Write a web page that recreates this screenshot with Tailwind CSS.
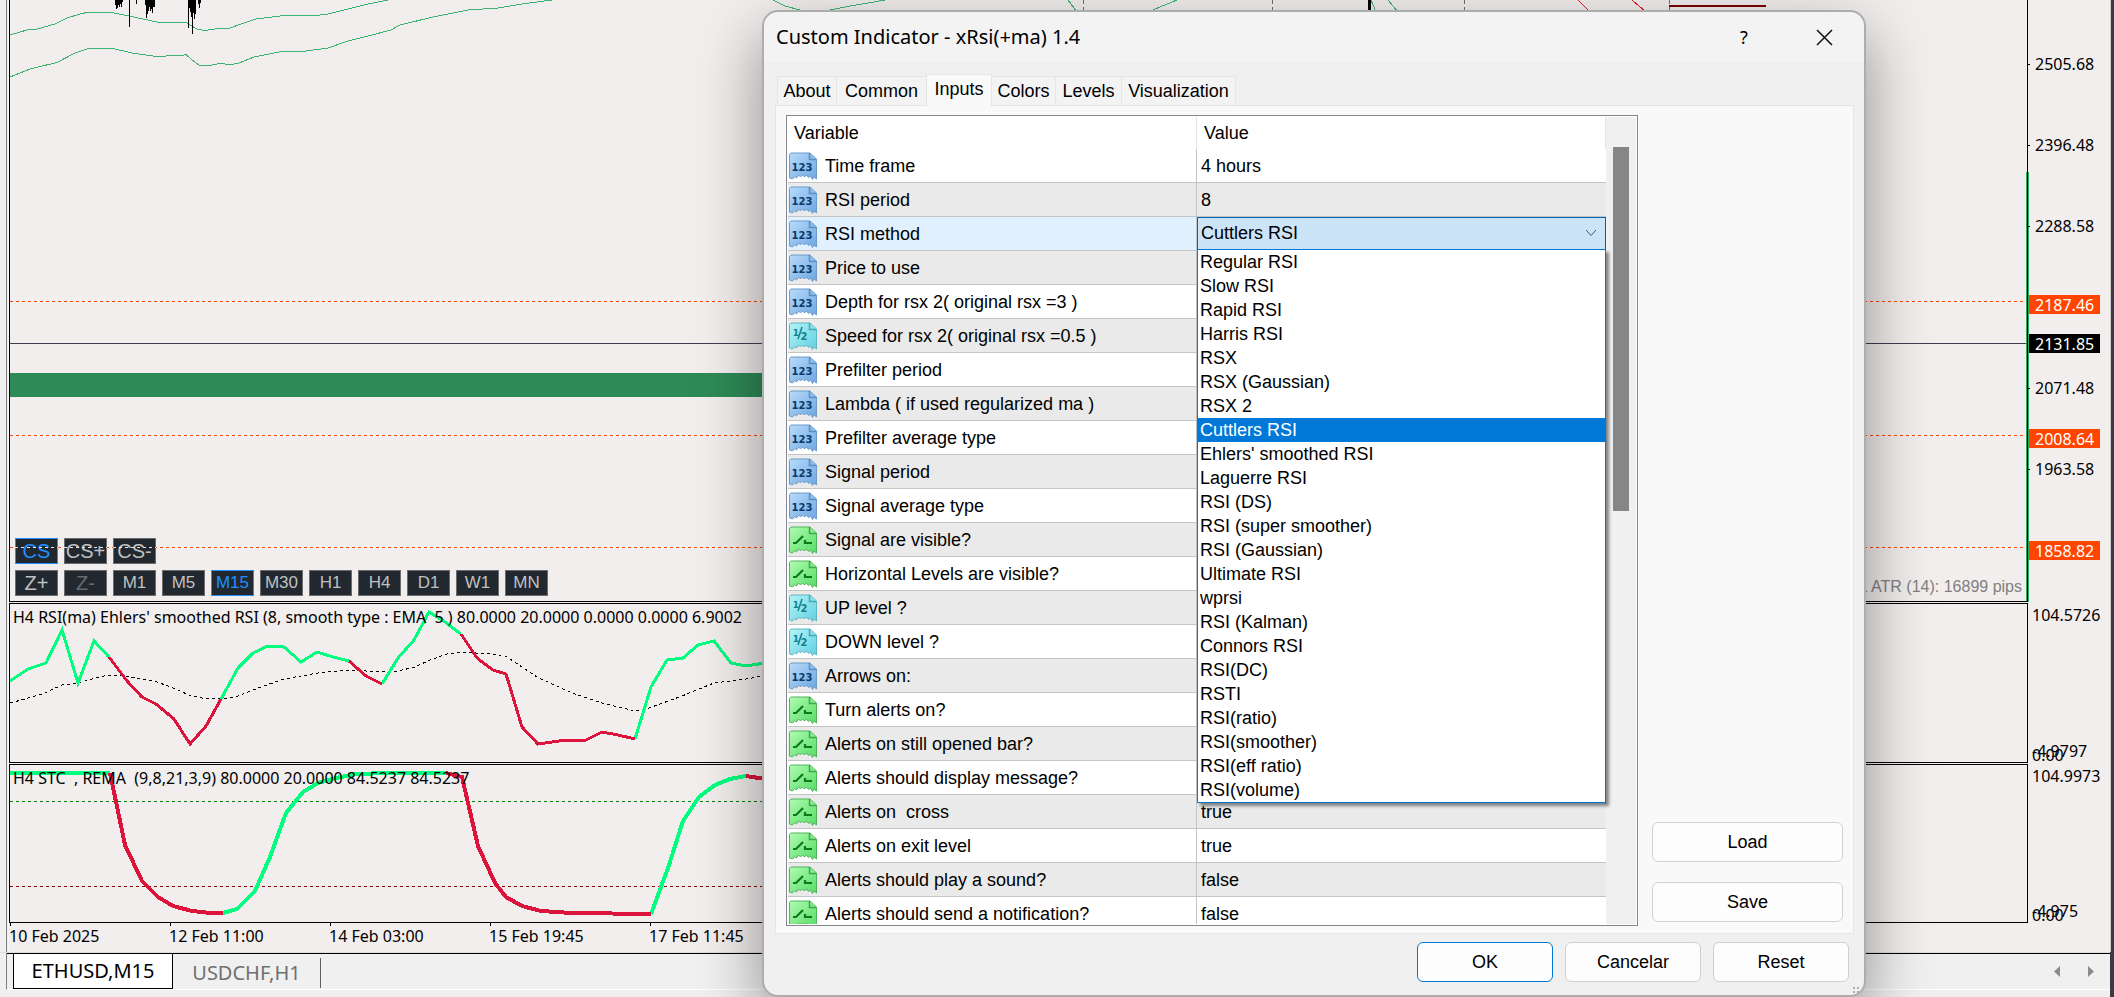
<!DOCTYPE html>
<html lang="en">
<head>
<meta charset="utf-8">
<title>Custom Indicator - xRsi(+ma) 1.4</title>
<script src="https://cdn.jsdelivr.net/npm/@tailwindcss/browser@4"></script>
</head>
<body class="relative flex h-screen flex-col overflow-hidden bg-[#f0f0f0] font-['Liberation_Sans',sans-serif] text-lg text-black">

<!-- icon library -->
<svg class="absolute size-0" aria-hidden="true">
  <defs>
    <linearGradient id="gBlue" x1="0" y1="0" x2="1" y2="1"><stop offset="0" stop-color="#b9dbfb"/><stop offset="1" stop-color="#6ca6e2"/></linearGradient>
    <linearGradient id="gCyan" x1="0" y1="0" x2="1" y2="1"><stop offset="0" stop-color="#b4f4f8"/><stop offset="1" stop-color="#62cfdf"/></linearGradient>
    <linearGradient id="gGreen" x1="0" y1="0" x2="1" y2="1"><stop offset="0" stop-color="#b0fbb0"/><stop offset="1" stop-color="#55dc66"/></linearGradient>
    <path id="sheet" d="M2 1H21L27.500 7V27L25 25L23.500 27.500L21.500 24L19.500 25.500L17.500 23L15.500 25L13.500 23L11.500 25L9.500 23L7.500 26L5.500 24.500L3.500 27L.5 26V2.500Z"/>
    <path id="fold" d="M20.500 1V7.500H27.500"/>
    <symbol id="int" viewBox="0 0 28 28">
      <use href="#sheet" fill="url(#gBlue)" stroke="#6d9cc8"/>
      <use href="#fold" fill="#8fbdea" stroke="#5a8fc4" stroke-width="1.500"/>
      <text x="13" y="19" text-anchor="middle" font-family="DejaVu Sans" font-weight="bold" font-size="10" fill="#0b3a66">123</text>
    </symbol>
    <symbol id="dbl" viewBox="0 0 28 28">
      <use href="#sheet" fill="url(#gCyan)" stroke="#5fb6c4"/>
      <use href="#fold" fill="#8ee3ec" stroke="#45a9b8" stroke-width="1.500"/>
      <text x="7" y="14" text-anchor="middle" font-family="DejaVu Sans" font-weight="bold" font-size="9" fill="#157f8c">1</text>
      <path d="M13 5L9 17" stroke="#157f8c" stroke-width="1.500"/>
      <text x="15" y="18" text-anchor="middle" font-family="DejaVu Sans" font-weight="bold" font-size="10" fill="#157f8c">2</text>
    </symbol>
    <symbol id="bool" viewBox="0 0 28 28">
      <use href="#sheet" fill="url(#gGreen)" stroke="#52b35c"/>
      <use href="#fold" fill="#86ec8c" stroke="#3fa74b" stroke-width="1.500"/>
      <path d="M4 17H7L14 10M16 14V17H23" fill="none" stroke="#0c7a1c" stroke-width="2.200"/>
    </symbol>
  </defs>
</svg>

<!-- chart window -->
<main class="flex min-h-0 flex-1 font-['Noto_Sans',sans-serif] text-base leading-5">
  <div class="w-[9px] shrink-0 border-r border-[#f8f8f8] bg-[#f0f0f0]"><div class="ml-[6px] h-full w-px bg-[#808080]"></div></div>

  <div class="flex min-w-0 flex-1 flex-col bg-[#f2eeed]">
    <!-- price -->
    <section class="flex min-h-0 flex-1">
      <div class="relative flex min-w-0 flex-1 flex-col justify-end overflow-hidden border-b border-l border-r border-black">
        <svg class="absolute inset-0 h-full w-full" shape-rendering="crispEdges" aria-hidden="true">
          <g transform="translate(-10 0)" fill="none">
            <rect x="10" y="373" width="1200" height="24" fill="#2e8b57"/>
            <g stroke="#3cb371">
              <path d="M10 35L27 30L37 29L55 24L67 18L80 14L89 12H109L129 16L157 22H185L197 29L204 30.500L219 28.500L230 28L241 24L256 19L284 15.500L313 16L328 14L348 9L368 4L388 0"/>
              <path d="M10 77L30 69L57 62.500L75 53L89 48.500H113L132 53L157 56.500L184 55L186 54.500L192 60L199 65L208 66L221 63L229 65L239 63L254 57L279 52L306 51L328 48L348 41L368 36L391 30L400 25L433 17L468 10L498 8L522 4L552 0"/>
              <path d="M773 0L785 6L800 10L815 11L830 10L850 6L868 3L885 0M1068 0L1077 12M1148 12L1160 7L1177 0M1371 0L1376 12M1388 0L1398 12"/>
            </g>
            <path d="M1578 0L1590 12M1632 0L1646 12" stroke="#e01b1b"/>
            <path d="M1083.500 0V12M1272.500 0V12M1464.500 0V12M1669.500 0V12" stroke="#707070" stroke-dasharray="4 3"/>
            <path d="M1669 6H1766" stroke="#7a0000" stroke-width="2"/>
            <path d="M1369.500 0V12" stroke="#000" stroke-width="3"/>
            <path d="M115.500 0V5M116.500 0V9M117.500 0V8M118.500 0V5M119.500 0V7M120.500 0V4M121.500 0V7M122.500 0V2M129.500 0V27M136.500 0V4M145.500 0V5M146.500 0V18M147.500 0V14M148.500 0V11M149.500 0V7M150.500 0V11M151.500 0V9M152.500 0V13M153.500 0V7M154.500 0V7M188.500 0V28M189.500 0V8M190.500 0V12M191.500 0V17M192.500 0V34M193.500 0V13M194.500 0V19M195.500 0V14M198.500 0V4M199.500 0V8M200.500 0V3" stroke="#000"/>
            <path d="M10 301.500H2024M10 435.500H2024M10 547.500H2024" stroke="#ff4500" stroke-dasharray="3 3"/>
            <path d="M10 343.500H2030" stroke="#3f3c52"/>
          </g>
        </svg>
        <div class="absolute right-0 bottom-0 top-[172px] w-px bg-[#2ea863]"></div>
        <div class="relative flex flex-col gap-1.5 pb-[5px] pl-[5px] font-['Liberation_Sans',sans-serif]">
          <div class="relative flex gap-1.5">
            <div class="flex gap-1.5" id="csRow"></div>
            <svg class="pointer-events-none absolute top-[9px] left-0" width="141" height="1" aria-hidden="true"><path d="M0 .5H43M49 .5H92M98 .5H141" stroke="#e8e8e8" stroke-dasharray="3 3"/></svg>
          </div>
          <div class="flex gap-1.5" id="tfRow"></div>
        </div>
        <p class="absolute right-[5px] bottom-1 font-['Liberation_Sans',sans-serif] text-base leading-5 text-[#808080]">H1 ATR (14): 16899 pips</p>
      </div>
      <div class="relative w-[82px] shrink-0">
        <div class="absolute left-0 bottom-0 top-[172px] w-px bg-[#2ea863]"></div>
        <div id="prices"></div>
      </div>
    </section>

    <!-- RSI -->
    <section class="mt-px flex h-[160px] shrink-0">
      <div class="relative min-w-0 flex-1 overflow-hidden border border-black">
        <svg class="absolute inset-0 h-full w-full" shape-rendering="crispEdges" aria-hidden="true">
          <g transform="translate(-10 -604)" fill="none">
            <path d="M10 703L25 699L45 693L62 685L78 683L95 678L109 675L124 676L154 681L171 687L189 695L202 698L222 699L238 696L258 688L284 679L318 673L349 670L366 671L382 672L398 671L415 667L430 660L447 654L462 652L490 654L507 657L537 677L572 693L602 703L635 711L649 708L682 696L714 683L746 679L763 676" stroke="#000" stroke-dasharray="3 3"/>
            <path d="M10 681L28 669L46 663L62 630L78 683L94 641L109 657M221 699L238 668L253 653L268 646L284 647L301 662L317 652L333 657L349 661M382 684L398 658L414 640L429 612L445 622L461 634M635 739L651 687L667 660L683 658L698 645L714 641L731 663L746 666L765 663" stroke="#00ff7f" stroke-width="3"/>
            <path d="M109 657L127 681L142 697L156 704L174 719L190 744L206 726L221 699M349 661L366 676L382 684M461 634L477 658L493 670L506 674L522 727L538 744L559 741L586 740L602 732L618 735L635 739" stroke="#dc143c" stroke-width="3"/>
          </g>
        </svg>
        <p class="relative ml-[3px] mt-[3px] whitespace-pre">H4 RSI(ma) Ehlers' smoothed RSI (8, smooth type : EMA  5 ) 80.0000 20.0000 0.0000 0.0000 6.9002</p>
      </div>
      <div class="relative w-[82px] shrink-0">
        <span class="absolute left-1 top-0.5">104.5726</span>
        <span class="absolute left-1 bottom-0.5">-4.9797</span>
        <span class="absolute left-1 -bottom-0.5">0.00</span>
      </div>
    </section>

    <!-- STC -->
    <section class="mt-px flex h-[159px] shrink-0">
      <div class="relative min-w-0 flex-1 overflow-hidden border border-black">
        <svg class="absolute inset-0 h-full w-full" shape-rendering="crispEdges" aria-hidden="true">
          <g transform="translate(-10 -765)" fill="none">
            <path d="M10 801.500H1210" stroke="#008000" stroke-dasharray="3 3"/>
            <path d="M10 886.500H1210" stroke="#8b0000" stroke-dasharray="3 3"/>
            <path d="M10 773H110M223 913L237 909L255 891L270 857L286 813L303 792L318 783L336 778L356 774L388 773H446M651 914L668 868L683 821L699 797L715 785L730 779L746 776" stroke="#00ff7f" stroke-width="4"/>
            <path d="M110 773L125 845L142 881L158 897L173 906L192 911L206 912.500L223 913M446 773L462 777L478 846L495 883L506 897L522 906L541 911L572 913L651 914M746 776L765 779" stroke="#dc143c" stroke-width="4"/>
          </g>
        </svg>
        <p class="relative ml-[3px] mt-[3px] whitespace-pre">H4 STC  , REMA  (9,8,21,3,9) 80.0000 20.0000 84.5237 84.5237</p>
      </div>
      <div class="relative w-[82px] shrink-0">
        <span class="absolute left-1 top-0.5">104.9973</span>
        <span class="absolute left-1 bottom-0.5">-4.975</span>
        <span class="absolute left-1 -bottom-0.5">0.00</span>
      </div>
    </section>

    <!-- time axis -->
    <div class="flex h-[29px] shrink-0 pl-px" id="times"></div>
  </div>
  <div class="w-1 shrink-0 border-l border-[#d0cccc] bg-[#3a3b47]"></div>
</main>

<!-- window tabs -->
<nav class="flex h-[45px] shrink-0 border-t border-[#dcdcdc] pl-[6px] font-['Noto_Sans',sans-serif] text-xl">
  <div class="flex h-[37px] flex-1 border-b border-l border-b-white border-l-[#808080]">
    <div class="flex flex-1 items-start border-t border-black pl-1.5">
      <button class="h-[35px] w-[160px] border border-t-0 border-black bg-white">ETHUSD,M15</button>
      <button class="mt-1 h-[30px] w-[148px] border-r border-[#606060] text-[#6f6f6f]">USDCHF,H1</button>
      <div class="ml-auto flex gap-7 self-center pr-[16px]">
        <button aria-label="Scroll tabs left"><svg width="6" height="11" fill="#8c8c8c"><path d="M6 0V11L0 5.500Z"/></svg></button>
        <button aria-label="Scroll tabs right"><svg width="6" height="11" fill="#8c8c8c"><path d="M0 0V11L6 5.500Z"/></svg></button>
      </div>
    </div>
  </div>
  <div class="-mt-px w-1 bg-[#3a3b47]"></div>
</nav>

<!-- dialog -->
<div role="dialog" aria-labelledby="dlgTitle" class="absolute top-[10px] bottom-0 left-[762px] flex w-[1104px] flex-col rounded-2xl border-2 border-[#adadad] bg-[#f0f0f0] shadow-[0_24px_64px_rgba(0,0,0,0.42)]">
  <header class="flex h-[50px] shrink-0 items-center rounded-t-2xl bg-[#f3f3f3] pl-3 pr-8 font-['Noto_Sans',sans-serif]">
    <h1 id="dlgTitle" class="flex-1 text-xl">Custom Indicator - xRsi(+ma) 1.4</h1>
    <button class="w-6 text-lg" aria-label="Help">?</button>
    <button class="ml-[60px] w-4" aria-label="Close"><svg width="17" height="17" fill="none" stroke="#111" stroke-width="1.500"><path d="M1 1L16 16M16 1L1 16"/></svg></button>
  </header>

  <div role="tablist" class="flex h-[43px] shrink-0 items-end pl-[13px]">
    <button role="tab" class="h-[29px] w-[60px] border border-b-0 border-[#e5e5e5] bg-[#f3f3f3] leading-7">About</button>
    <button role="tab" class="-ml-px h-[29px] w-[91px] border border-b-0 border-[#e5e5e5] bg-[#f3f3f3] leading-7">Common</button>
    <button role="tab" aria-selected="true" class="z-10 -mb-px -ml-px h-8 w-[66px] border border-b-0 border-[#e5e5e5] bg-[#f9f9f9] pb-1 leading-7">Inputs</button>
    <button role="tab" class="-ml-px h-[29px] w-[65px] border border-b-0 border-[#e5e5e5] bg-[#f3f3f3] leading-7">Colors</button>
    <button role="tab" class="-ml-px h-[29px] w-[67px] border border-b-0 border-[#e5e5e5] bg-[#f3f3f3] leading-7">Levels</button>
    <button role="tab" class="-ml-px h-[29px] w-[115px] border border-b-0 border-[#e5e5e5] bg-[#f3f3f3] leading-7">Visualization</button>
  </div>

  <div class="mr-[10px] ml-[11px] flex min-h-0 flex-1 gap-[14px] border border-[#e5e5e5] bg-[#f9f9f9] pt-[9px] pr-[10px] pb-[7px] pl-[10px]">
    <div class="relative flex min-w-0 flex-1 border border-[#828790] bg-white p-px">
      <div class="min-w-0 flex-1 overflow-hidden">
        <table class="w-full table-fixed border-separate border-spacing-0">
          <thead>
            <tr class="h-8">
              <th class="w-1/2 border-r border-[#e5e5e5] pl-[6px] text-left font-normal">Variable</th>
              <th class="border-r border-[#e5e5e5] pl-[7px] text-left font-normal">Value</th>
            </tr>
          </thead>
          <tbody id="rows"></tbody>
        </table>
      </div>
      <div class="flex w-[30px] shrink-0 justify-center bg-[#f0f0f0] pt-[30px]"><div class="h-[364px] w-4 bg-[#868686]"></div></div>
      <ul role="listbox" aria-label="RSI method options" id="options" class="absolute top-[133px] right-[31px] left-[410px] border border-[#0078d7] bg-white shadow-[3px_3px_3px_rgba(0,0,0,0.45)]"></ul>
    </div>
    <div class="flex w-[191px] shrink-0 flex-col justify-end gap-5 pb-1">
      <button class="h-10 rounded-md border border-[#d0d0d0] bg-[#fdfdfd]">Load</button>
      <button class="h-10 rounded-md border border-[#d0d0d0] bg-[#fdfdfd]">Save</button>
    </div>
  </div>

  <footer class="flex shrink-0 justify-end gap-3 pt-2 pr-[15px] pb-[13px]">
    <button class="h-10 w-[136px] rounded-md border border-[#0078d4] bg-[#fdfdfd]">OK</button>
    <button class="h-10 w-[136px] rounded-md border border-[#d0d0d0] bg-[#fdfdfd]">Cancelar</button>
    <button class="h-10 w-[136px] rounded-md border border-[#d0d0d0] bg-[#fdfdfd]">Reset</button>
  </footer>
  <svg class="absolute right-[5px] bottom-0" width="6" height="8" fill="#b0b0b0" aria-hidden="true"><path d="M0 0h2v2h-2zM4 0h2v2h-2zM0 4h2v2h-2zM4 4h2v2h-2z"/></svg>
</div>

<script>
  const byId = id => document.getElementById(id);

  const rows = [
    ['int', 'Time frame', '4 hours'], ['int', 'RSI period', '8'], ['int', 'RSI method', null],
    ['int', 'Price to use', ''], ['int', 'Depth for rsx 2( original rsx =3 )', ''],
    ['dbl', 'Speed for rsx 2( original rsx =0.5 )', ''], ['int', 'Prefilter period', ''],
    ['int', 'Lambda ( if used regularized ma )', ''], ['int', 'Prefilter average type', ''],
    ['int', 'Signal period', ''], ['int', 'Signal average type', ''], ['bool', 'Signal are visible?', ''],
    ['bool', 'Horizontal Levels are visible?', ''], ['dbl', 'UP level ?', ''], ['dbl', 'DOWN level ?', ''],
    ['int', 'Arrows on:', ''], ['bool', 'Turn alerts on?', ''], ['bool', 'Alerts on still opened bar?', ''],
    ['bool', 'Alerts should display message?', ''], ['bool', 'Alerts on  cross', 'true'],
    ['bool', 'Alerts on exit level', 'true'], ['bool', 'Alerts should play a sound?', 'false'],
    ['bool', 'Alerts should send a notification?', 'false']
  ];
  const combo = `<div class="relative h-[33px]">
      <select aria-label="RSI method" class="h-full w-full appearance-none border border-[#0063b1] bg-[#cce4f7] pl-[3px] pb-px"><option>Cuttlers RSI</option></select>
      <svg class="pointer-events-none absolute top-[12px] right-[9px]" width="12" height="8" fill="none" stroke="#555"><path d="M1 1L6 6.500L11 1"/></svg></div>`;
  byId('rows').innerHTML = rows.map(([icon, name, value], i) => {
    const shade = value === null ? 'h-[34px] bg-[#e0f0fe]' : i % 2 ? 'h-[34px] bg-[#eaeaea]' : 'h-[34px] bg-white';
    return `<tr class="${shade}">
      <td class="h-[34px] border-r border-b border-[#c4c4c4] p-0"><div class="flex items-center gap-2 pl-px whitespace-pre"><svg class="size-7 shrink-0"><use href="#${icon}"/></svg>${name}</div></td>
      <td class="h-[34px] border-b border-[#c4c4c4] p-0">${value === null ? combo : `<div class="pl-1">${value}</div>`}</td></tr>`;
  }).join('');

  const options = ['Regular RSI', 'Slow RSI', 'Rapid RSI', 'Harris RSI', 'RSX', 'RSX (Gaussian)', 'RSX 2', 'Cuttlers RSI',
    "Ehlers' smoothed RSI", 'Laguerre RSI', 'RSI (DS)', 'RSI (super smoother)', 'RSI (Gaussian)', 'Ultimate RSI', 'wprsi',
    'RSI (Kalman)', 'Connors RSI', 'RSI(DC)', 'RSTI', 'RSI(ratio)', 'RSI(smoother)', 'RSI(eff ratio)', 'RSI(volume)'];
  byId('options').innerHTML = options.map(o => o === 'Cuttlers RSI'
    ? `<li role="option" aria-selected="true" class="h-6 bg-[#0078d7] pl-0.5 leading-6 text-white">${o}</li>`
    : `<li role="option" class="h-6 pl-0.5 leading-6">${o}</li>`).join('');

  const chartButton = (label, tone) => `<button class="h-[26px] w-[43px] border leading-6 ${tone}">${label}</button>`;
  const normal = 'border-[#6c6c6c] bg-[#212830] text-[#c0c0c0] text-[17px]';
  const big = 'border-[#6c6c6c] bg-[#212830] text-[#c0c0c0] text-[20px]';
  const dim = 'border-[#6c6c6c] bg-[#212830] text-[#696969] text-[20px]';
  const on = 'border-[#1e90ff] bg-[#212830] text-[#1e90ff] text-[17px]';
  const onBig = 'border-[#1e90ff] bg-[#212830] text-[#1e90ff] text-[20px]';
  byId('csRow').innerHTML = chartButton('CS', onBig) + chartButton('CS+', big) + chartButton('CS-', big);
  byId('tfRow').innerHTML = chartButton('Z+', big) + chartButton('Z-', dim)
    + ['M1', 'M5', 'M15', 'M30', 'H1', 'H4', 'D1', 'W1', 'MN'].map(t => chartButton(t, t === 'M15' ? on : normal)).join('');

  const prices = [[54, '2505.68'], [135, '2396.48'], [216, '2288.58'], [378, '2071.48'], [459, '1963.58']];
  const tags = [[295, '2187.46', 'bg-[#ff4500]'], [334, '2131.85', 'bg-black'], [429, '2008.64', 'bg-[#ff4500]'], [541, '1858.82', 'bg-[#ff4500]']];
  byId('prices').innerHTML =
    prices.map(([y, p]) => `<span class="absolute left-0 flex h-5 items-center gap-[5px]" style="top:${y}px"><i class="h-px w-0.5 bg-black"></i>${p}</span>`).join('') +
    tags.map(([y, p, c]) => `<span class="absolute left-px h-[19px] w-[71px] pl-1.5 leading-5 text-white ${c}" style="top:${y}px">${p}</span>`).join('');

  byId('times').innerHTML = ['10 Feb 2025', '12 Feb 11:00', '14 Feb 03:00', '15 Feb 19:45', '17 Feb 11:45']
    .map(t => `<div class="w-[160px]"><div class="h-[3px] w-px bg-black"></div><div class="-ml-px">${t}</div></div>`).join('');
</script>
</body>
</html>
